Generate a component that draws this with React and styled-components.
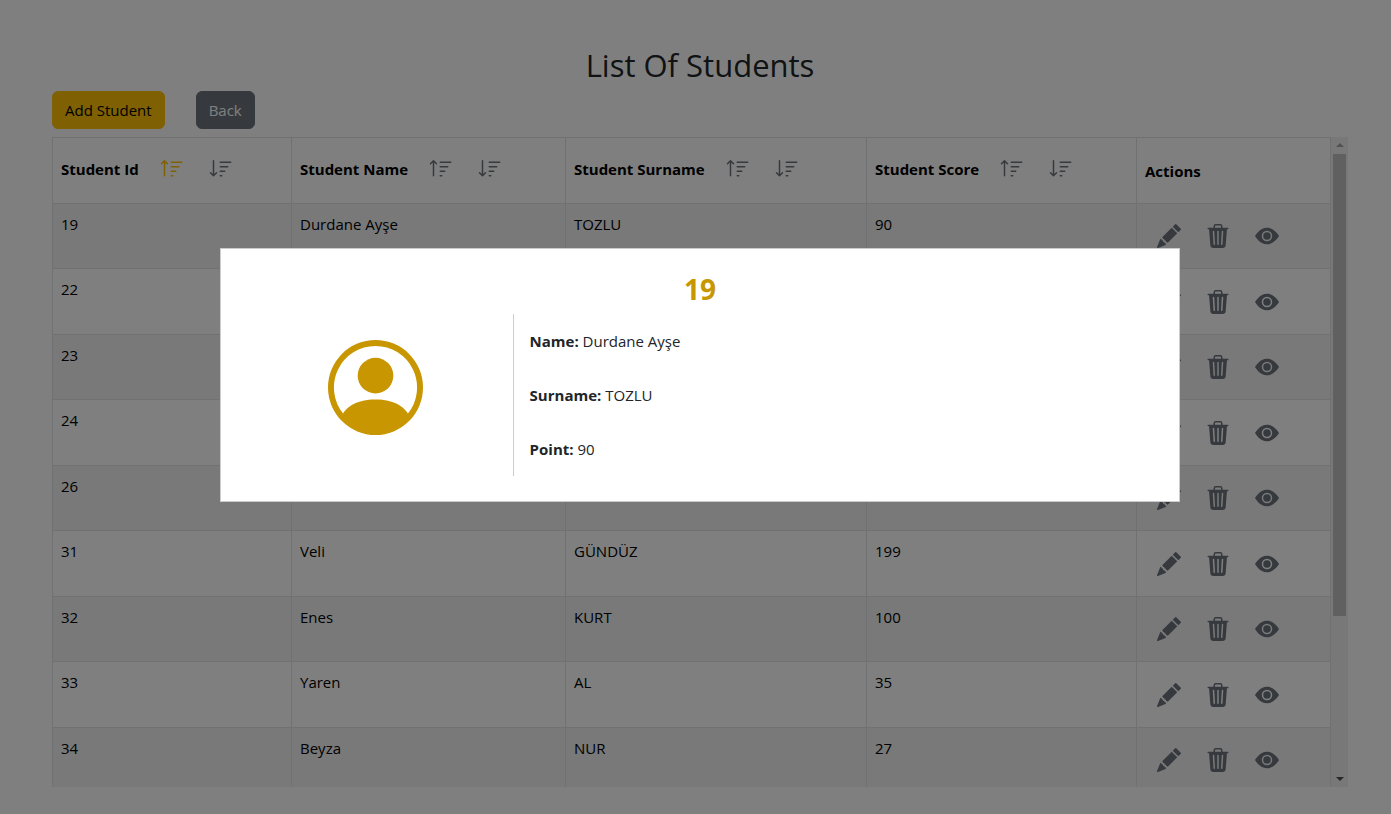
import React from "react";
import styled, { createGlobalStyle } from "styled-components";
import {
  BsSortUp,
  BsSortDown,
  BsPencilFill,
  BsTrash3Fill,
  BsEyeFill,
  BsPersonCircle,
} from "react-icons/bs";

const GlobalStyle = createGlobalStyle`
  *, *::before, *::after { box-sizing: border-box; }
  body {
    margin: 0;
    background: #fff;
    color: #212529;
    font-family: "Segoe UI", "Open Sans", "Noto Sans", sans-serif;
    font-size: 15px;
    line-height: 24px;
  }
`;

const Page = styled.main`
  display: flex;
  flex-direction: column;
  gap: 8px;
  height: 100vh;
  padding: 48px 43px 27px 52px;
`;

const Title = styled.h1`
  margin: 0;
  font-size: 31px;
  font-weight: 500;
  line-height: 35px;
  text-align: center;
`;

const Toolbar = styled.div`
  display: flex;
  gap: 31px;
`;

const Button = styled.button`
  height: 38px;
  padding: 0 12px;
  border: 1px solid ${(p) => p.$color};
  border-radius: 6px;
  background: ${(p) => p.$color};
  color: ${(p) => p.$text};
  font: inherit;
`;

const TableArea = styled.section`
  display: flex;
  flex: 1;
  min-height: 0;
  overflow: hidden;
`;

const TableClip = styled.div`
  flex: 1;
  overflow: hidden;
`;

const Table = styled.table`
  width: 100%;
  table-layout: fixed;
  border-collapse: collapse;
  color: #000;
`;

const HeadRow = styled.tr`
  height: 66px;
`;

const Row = styled.tr`
  height: 66px;

  &:nth-child(odd) {
    height: 65px;
    background: #f2f2f2;
  }
`;

const HeadCell = styled.th`
  padding: 0 8px;
  border: 1px solid #dee2e6;
  font-weight: 700;
  text-align: left;
`;

const Cell = styled.td`
  padding: 8px 8px 0;
  border: 1px solid #dee2e6;
  vertical-align: top;
`;

const ActionCell = styled(Cell)`
  padding: 0 8px;
  vertical-align: middle;
`;

const HeadContent = styled.div`
  display: flex;
  align-items: center;
  gap: 9px;
  padding-bottom: 4px;
`;

const IconGroup = styled.div`
  display: flex;
  gap: 1px;
`;

const IconButton = styled.button`
  display: flex;
  padding: 0 12px;
  border: 0;
  background: transparent;
  color: ${(p) => (p.$active ? "#ffc107" : "#6c757d")};
  font-size: 24px;
`;

const ScrollBar = styled.div`
  display: flex;
  flex-direction: column;
  align-items: center;
  justify-content: space-between;
  width: 17px;
  padding: 6px 0;
  background: #f1f1f1;
`;

const ScrollArrow = styled.span`
  border: 4px solid transparent;
  border-top-width: ${(p) => (p.$up ? 0 : "4px")};
  border-bottom-width: ${(p) => (p.$up ? "4px" : 0)};
  border-${(p) => (p.$up ? "bottom" : "top")}-color: ${(p) => (p.$up ? "#a3a3a3" : "#505050")};
`;

const ScrollTrack = styled.div`
  flex: 1;
  width: 13px;
  padding: 7px 0;
`;

const ScrollThumb = styled.div`
  height: 75%;
  background: #c1c1c1;
`;

const Backdrop = styled.div`
  position: fixed;
  inset: 0;
  display: flex;
  align-items: center;
  justify-content: center;
  padding: 0 43px 64px 52px;
  background: rgba(0, 0, 0, 0.5);
`;

const Dialog = styled.div`
  width: 100%;
  max-width: 960px;
  padding: 25px 13px;
  border: 1px solid #ccc;
  background: #fff;
`;

const DialogTitle = styled.h2`
  margin: 0;
  padding-bottom: 10px;
  color: #c89600;
  font-size: 28px;
  font-weight: 700;
  line-height: 30px;
  text-align: center;
`;

const DialogBody = styled.div`
  display: grid;
  grid-template-columns: 3fr 7fr;
`;

const Avatar = styled.div`
  display: flex;
  align-items: center;
  justify-content: center;
  padding: 0 0 15px 4px;
  border-right: 1px solid #ccc;
  color: #c89600;
  font-size: 95px;
`;

const Details = styled.div`
  padding-left: 16px;
`;

const Detail = styled.p`
  margin: 0;
  padding: 15px 0;
`;

const columns = [
  { label: "Student Id", width: 239, active: true },
  { label: "Student Name", width: 274 },
  { label: "Student Surname", width: 301 },
  { label: "Student Score", width: 270 },
];

const students = [
  [19, "Durdane Ayşe", "TOZLU", 90],
  [22, "", "", ""],
  [23, "", "", ""],
  [24, "", "", ""],
  [26, "", "", ""],
  [31, "Veli", "GÜNDÜZ", 199],
  [32, "Enes", "KURT", 100],
  [33, "Yaren", "AL", 35],
  [34, "Beyza", "NUR", 27],
];

export default function App() {
  return (
    <>
      <GlobalStyle />
      <Page>
        <Title>List Of Students</Title>
        <Toolbar>
          <Button $color="#ffc107" $text="#000">Add Student</Button>
          <Button $color="#6c757d" $text="#fff">Back</Button>
        </Toolbar>
        <TableArea>
          <TableClip>
            <Table>
              <colgroup>
                {columns.map((c) => (
                  <col key={c.label} width={c.width} />
                ))}
                <col width={194} />
              </colgroup>
              <thead>
                <HeadRow>
                  {columns.map((c) => (
                    <HeadCell key={c.label}>
                      <HeadContent>
                        {c.label}
                        <IconGroup>
                          <IconButton $active={c.active} aria-label="Sort ascending">
                            <BsSortUp />
                          </IconButton>
                          <IconButton aria-label="Sort descending">
                            <BsSortDown />
                          </IconButton>
                        </IconGroup>
                      </HeadContent>
                    </HeadCell>
                  ))}
                  <HeadCell>Actions</HeadCell>
                </HeadRow>
              </thead>
              <tbody>
                {students.map((s) => (
                  <Row key={s[0]}>
                    {s.map((value, i) => (
                      <Cell key={i}>{value}</Cell>
                    ))}
                    <ActionCell>
                      <IconGroup>
                        <IconButton aria-label="Edit"><BsPencilFill /></IconButton>
                        <IconButton aria-label="Delete"><BsTrash3Fill /></IconButton>
                        <IconButton aria-label="View"><BsEyeFill /></IconButton>
                      </IconGroup>
                    </ActionCell>
                  </Row>
                ))}
              </tbody>
            </Table>
          </TableClip>
          <ScrollBar aria-hidden="true">
            <ScrollArrow $up />
            <ScrollTrack>
              <ScrollThumb />
            </ScrollTrack>
            <ScrollArrow />
          </ScrollBar>
        </TableArea>
      </Page>
      <Backdrop>
        <Dialog role="dialog" aria-modal="true" aria-labelledby="student-title">
          <DialogTitle id="student-title">19</DialogTitle>
          <DialogBody>
            <Avatar><BsPersonCircle /></Avatar>
            <Details>
              <Detail><b>Name:</b> Durdane Ayşe</Detail>
              <Detail><b>Surname:</b> TOZLU</Detail>
              <Detail><b>Point:</b> 90</Detail>
            </Details>
          </DialogBody>
        </Dialog>
      </Backdrop>
    </>
  );
}
